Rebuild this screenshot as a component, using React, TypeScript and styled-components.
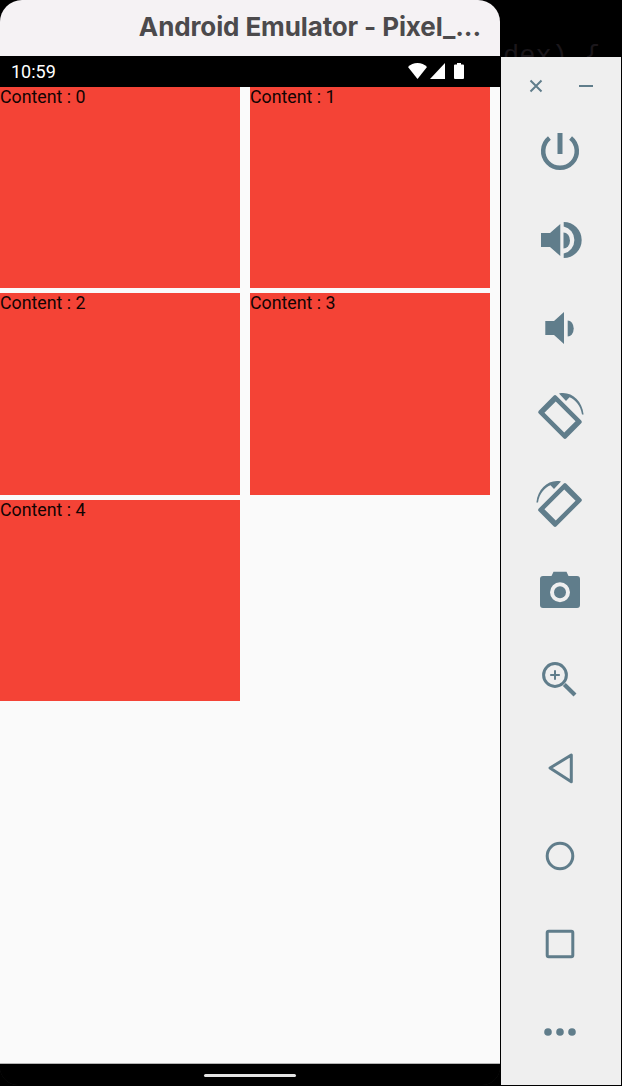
// Android emulator window showing a two-column grid of red cards, with the side tool panel
import styled, { createGlobalStyle } from "styled-components";

const ICON_COLOR = "#607d8b";
const PANEL_COLOR = "#efefef";

const GlobalStyle = createGlobalStyle`
    html, body {
        margin: 0;
        padding: 0;
        height: 100%;
        background: #000;
    }
`;

// === Layout ===

const Page = styled.div`
    width: 622px;
    height: 1086px;
    display: flex;
    overflow: hidden;
    background: #000;
`;

const Emulator = styled.div`
    width: 500px;
    height: 1085px;
    display: flex;
    flex-direction: column;
    border-radius: 22px 22px 18px 18px;
    overflow: hidden;
    box-shadow: inset 0 -1px 0 #222;
`;

const TitleBar = styled.header`
    height: 56px;
    flex: none;
    display: flex;
    align-items: center;
    justify-content: flex-end;
    padding: 0 19px 3px 0;
    box-sizing: border-box;
    background: #f5f2f4;
    color: #4c4a4c;
    font: 700 26px "Inter", "Liberation Sans", sans-serif;
    letter-spacing: -0.12px;
`;

const StatusBar = styled.div`
    height: 31px;
    flex: none;
    display: flex;
    align-items: center;
    justify-content: space-between;
    padding: 0 36px 1px 11px;
    box-sizing: border-box;
    background: #000;
    color: #fff;
    font: 400 18px "Roboto", sans-serif;
`;

const StatusIcons = styled.div`
    display: flex;
    align-items: center;
`;

const Content = styled.main`
    flex: 1;
    display: grid;
    grid-template-columns: 240px 240px;
    grid-auto-rows: 201.33px;
    column-gap: 10px;
    row-gap: 5px;
    align-content: start;
    background: #fafafa;
    border-bottom: 1px solid #b5b5b5;
`;

const Card = styled.div`
    background: #f44336;
    color: #120403;
    font: 400 17.8px/20px "Roboto", sans-serif;
    white-space: nowrap;
`;

const NavBar = styled.div`
    height: 21px;
    flex: none;
    display: flex;
    justify-content: center;
    padding-top: 10px;
    box-sizing: border-box;
    background: #000;
`;

const HomeHandle = styled.div`
    width: 92px;
    height: 3px;
    border-radius: 2px;
    background: #e4e4e4;
`;

const SideColumn = styled.div`
    width: 120px;
    margin-left: 1px;
    display: flex;
    flex-direction: column;
`;

// Editor text of the window behind, cut off by the panel
const BehindText = styled.div`
    height: 57px;
    flex: none;
    overflow: hidden;
    padding: 42px 0 0 2px;
    box-sizing: border-box;
    color: #1b171b;
    font: 400 27px "Liberation Mono", monospace;
    white-space: pre;
`;

const ToolPanel = styled.aside`
    height: 1028px;
    flex: none;
    display: flex;
    flex-direction: column;
    align-items: center;
    gap: 40px;
    padding: 5px 2px 0 0;
    box-sizing: border-box;
    background: ${PANEL_COLOR};
`;

const WindowControls = styled.div`
    display: flex;
    gap: 2px;
    margin: 0 0 -22px 1px;
`;

const ToolIcon = styled.svg.attrs({ viewBox: "0 0 48 48" })`
    width: 48px;
    height: 48px;
    flex: none;
    display: block;
    overflow: visible;
    fill: ${ICON_COLOR};
`;

const StrokeIcon = styled(ToolIcon)`
    fill: none;
    stroke: ${ICON_COLOR};
    stroke-width: 3px;
    stroke-linejoin: round;
`;

const ThinStrokeIcon = styled(StrokeIcon)`
    stroke-width: 2px;
`;

const StatusGlyph = styled.svg<{ $gap?: number }>`
    display: block;
    fill: #fff;
    margin-left: ${(p) => p.$gap ?? 0}px;
`;

// === Icons ===

function RotateIcon({ mirrored }: { mirrored?: boolean }) {
  return (
    <ToolIcon>
      <g transform={mirrored ? "translate(48 0) scale(-1 1)" : undefined}>
        <g transform="rotate(45 24 25)">
          <path
            fillRule="evenodd"
            d="M6.5 12.5h35a2 2 0 0 1 2 2v21a2 2 0 0 1-2 2h-35a2 2 0 0 1-2-2v-21a2 2 0 0 1 2-2zM10 17v16h28V17z"
          />
        </g>
        <path d="M23 1.4C35 -1.2 46 8 47.6 22.4H46C44.6 13.5 39.5 7.8 33.5 5.2L30 9Z" />
      </g>
    </ToolIcon>
  );
}

function StatusGlyphs() {
  return (
    <StatusIcons>
      <StatusGlyph width="19" height="16" viewBox="0 0 19 16">
        <path d="M9.5 16 0 4C2.5 1.6 5.8 0 9.5 0S16.5 1.6 19 4Z" />
      </StatusGlyph>
      <StatusGlyph width="15" height="16" viewBox="0 0 15 16" $gap={3}>
        <path d="M15 0V16H0Z" />
      </StatusGlyph>
      <StatusGlyph width="10" height="16" viewBox="0 0 10 16" $gap={9}>
        <path d="M3 0H7V1.5H9A1 1 0 0 1 10 2.5V15A1 1 0 0 1 9 16H1A1 1 0 0 1 0 15V2.5A1 1 0 0 1 1 1.5H3Z" />
      </StatusGlyph>
    </StatusIcons>
  );
}

const cards = [0, 1, 2, 3, 4];

export default function App() {
  return (
    <Page>
      <GlobalStyle />
      <Emulator>
        <TitleBar>Android Emulator - Pixel_...</TitleBar>
        <StatusBar>
          <span>10:59</span>
          <StatusGlyphs />
        </StatusBar>
        <Content>
          {cards.map((n) => (
            <Card key={n}>Content : {n}</Card>
          ))}
        </Content>
        <NavBar>
          <HomeHandle />
        </NavBar>
      </Emulator>

      <SideColumn>
        <BehindText>dex) {"{"}</BehindText>
        <ToolPanel>
          <WindowControls>
            <ThinStrokeIcon>
              <path d="M18.5 18.5 29.5 29.5M29.5 18.5 18.5 29.5" />
            </ThinStrokeIcon>
            <ThinStrokeIcon>
              <path d="M17 24H31" />
            </ThinStrokeIcon>
          </WindowControls>

          {/* power */}
          <ToolIcon>
            <rect x="21.5" y="5" width="5" height="21" />
            <path
              d="M13.4 10A16.8 16.8 0 1 0 34.6 10"
              fill="none"
              stroke={ICON_COLOR}
              strokeWidth="4.5"
            />
          </ToolIcon>

          {/* volume up */}
          <ToolIcon>
            <path d="M5 17H14L24.3 8V40L14 31H5Z" />
            <path d="M27.5 16.5A6.5 8 0 0 1 27.5 32.5Z" />
            <path d="M27.7 6A18 18 0 0 1 27.7 42V37.6A14 14 0 0 0 27.7 10.4Z" />
          </ToolIcon>

          {/* volume down */}
          <ToolIcon>
            <path d="M9.3 17H18L28 8V40L18 31H9.3Z" />
            <path d="M31.7 16.5A6 8 0 0 1 31.7 32.5Z" />
          </ToolIcon>

          <RotateIcon />
          <RotateIcon mirrored />

          {/* camera */}
          <ToolIcon>
            <path
              fillRule="evenodd"
              d="M7 8H15.5L17.5 3.7H30.5L32.5 8H41A3 3 0 0 1 44 11V37A3 3 0 0 1 41 40H7A3 3 0 0 1 4 37V11A3 3 0 0 1 7 8ZM24 14.3A10 10 0 1 0 24 34.3A10 10 0 1 0 24 14.3Z"
            />
            <circle cx="24" cy="24.3" r="6" />
          </ToolIcon>

          {/* zoom */}
          <StrokeIcon>
            <circle cx="19" cy="19" r="11.4" />
            <path d="M14.2 19H23.8M19 14.2V23.8" strokeWidth="2" />
            <path d="M28.3 28.6 39 39" strokeWidth="4.2" />
          </StrokeIcon>

          {/* back, home, overview */}
          <StrokeIcon>
            <path d="M14 24 35.3 11V37.7Z" />
          </StrokeIcon>
          <StrokeIcon>
            <circle cx="24" cy="24" r="12.8" />
          </StrokeIcon>
          <StrokeIcon>
            <rect x="11.2" y="11.2" width="25.6" height="25.6" rx="1.5" />
          </StrokeIcon>

          {/* more */}
          <ToolIcon>
            <circle cx="12" cy="24" r="3.8" />
            <circle cx="24" cy="24" r="3.8" />
            <circle cx="36" cy="24" r="3.8" />
          </ToolIcon>
        </ToolPanel>
      </SideColumn>
    </Page>
  );
}
